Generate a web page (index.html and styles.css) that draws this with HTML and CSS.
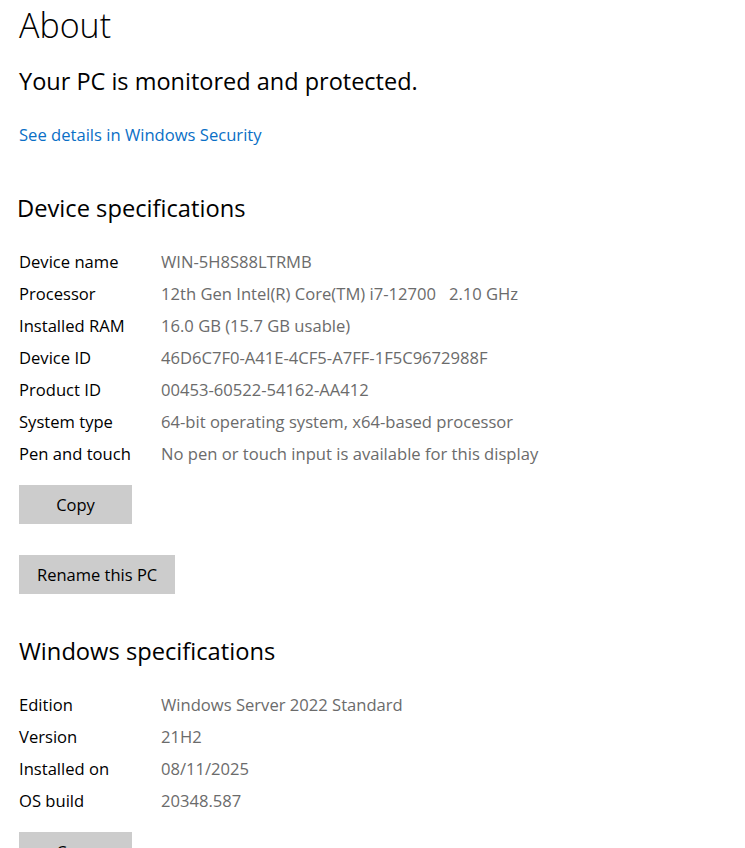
FILE: index.html
```html
<!DOCTYPE html>
<html lang="en">
<head>
  <meta charset="UTF-8" />
  <meta name="viewport" content="width=device-width, initial-scale=1.0"/>
  <title>About</title>
  <link rel="stylesheet" href="styles.css">
</head>
<body>

  <h1 class="title">About</h1>
  <p class="status">Your PC is monitored and protected.</p>
  <a href="#" class="link">See details in Windows Security</a>

  <h2 class="section device">Device specifications</h2>
  <dl class="specs">
    <dt>Device name</dt><dd>WIN-5H8S88LTRMB</dd>
    <dt>Processor</dt><dd>12th Gen Intel(R) Core(TM) i7-12700&nbsp;&nbsp;&nbsp;2.10 GHz</dd>
    <dt>Installed RAM</dt><dd>16.0 GB (15.7 GB usable)</dd>
    <dt>Device ID</dt><dd>46D6C7F0-A41E-4CF5-A7FF-1F5C9672988F</dd>
    <dt>Product ID</dt><dd>00453-60522-54162-AA412</dd>
    <dt>System type</dt><dd>64-bit operating system, x64-based processor</dd>
    <dt>Pen and touch</dt><dd>No pen or touch input is available for this display</dd>
  </dl>
  <button class="button copy">Copy</button>
  <button class="button rename">Rename this PC</button>

  <h2 class="section win">Windows specifications</h2>
  <dl class="specs">
    <dt>Edition</dt><dd>Windows Server 2022 Standard</dd>
    <dt>Version</dt><dd>21H2</dd>
    <dt>Installed on</dt><dd>08/11/2025</dd>
    <dt>OS build</dt><dd>20348.587</dd>
  </dl>
  <button class="button copy">Copy</button>

</body>
</html>
```

FILE: styles.css
```css
body {
  margin: 0;
  padding: 0 19px;
  font-family: 'Open Sans', 'Noto Sans', sans-serif;
  color: #000;
  background: #fff;
}

.title {
  margin: 3px 0 0;
  font-size: 34px;
  line-height: 44px;
  font-weight: 300;
}

.status {
  margin: 17px 0 0;
  font-size: 23.5px;
  line-height: 34px;
}

.link {
  display: block;
  margin-top: 25px;
  font-size: 16.6px;
  line-height: 24px;
  color: #0a6fc6;
  text-decoration: none;
}

.section {
  margin: 45px 0 0;
  font-size: 23.7px;
  line-height: 32px;
  font-weight: 400;
}

/* the device heading sits a touch further left */
.section.device {
  margin-left: -2px;
}

.section.win {
  margin-top: 41px;
}

.specs {
  display: grid;
  grid-template-columns: 142px auto;
  margin: 22px 0 0;
  font-size: 16.6px;
  line-height: 32px;
}

.specs dt {
  color: #000;
}

.specs dd {
  margin: 0;
  color: #6b6b6b;
  white-space: nowrap;
}

.button {
  display: block;
  height: 39px;
  margin-top: 15px;
  padding: 0 18px;
  font-family: inherit;
  font-size: 16.5px;
  color: #000;
  background: #cccccc;
  border: 0;
}

.button.copy {
  width: 113px;
}

.button.rename {
  margin-top: 31px;
}
```
